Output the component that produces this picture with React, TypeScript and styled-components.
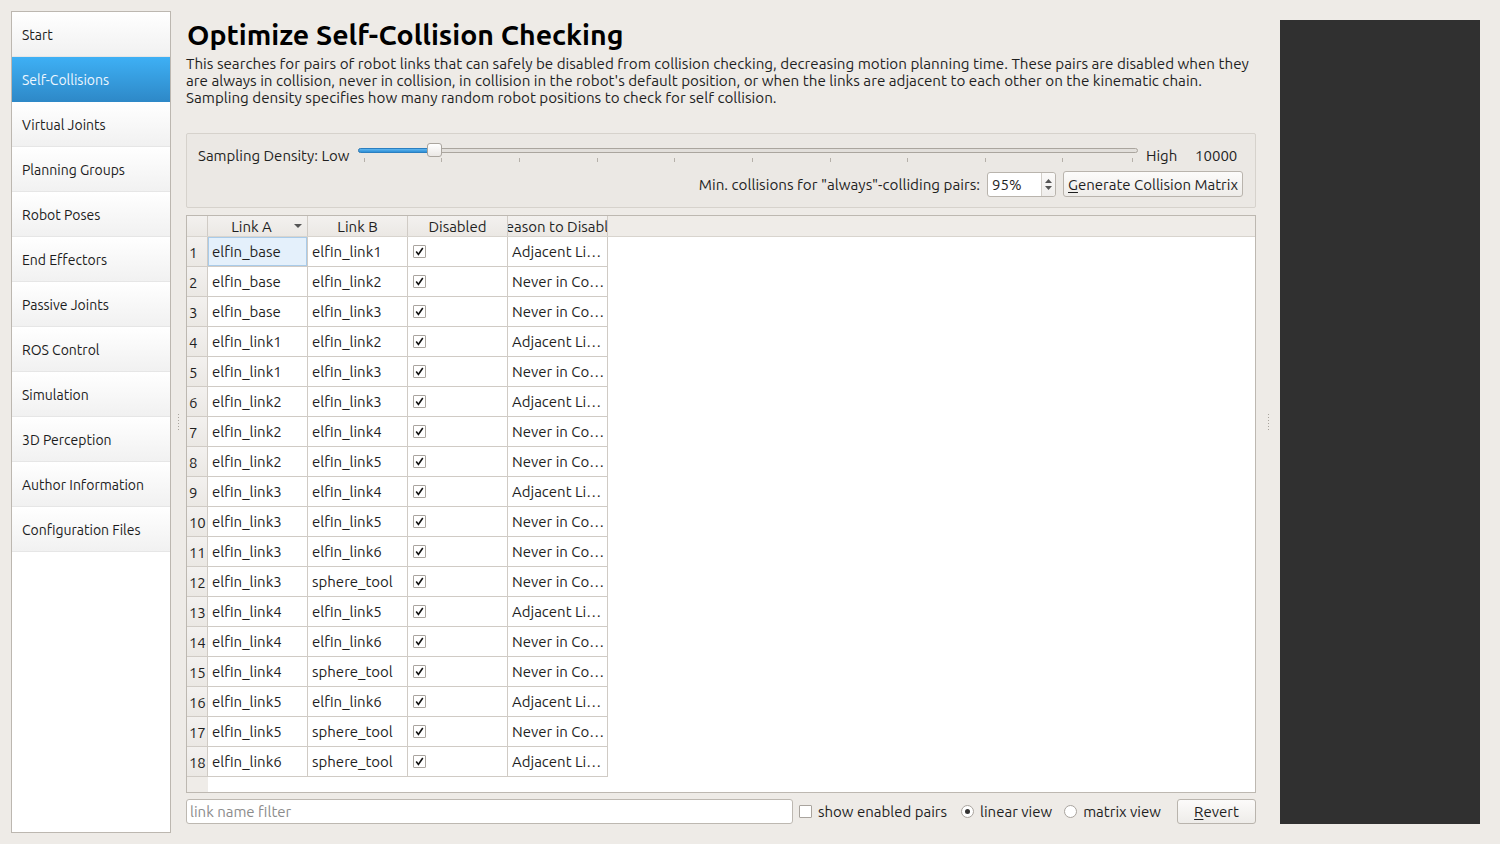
import React from "react";
import styled, { createGlobalStyle } from "styled-components";

const FONT = `"Ubuntu", "Open Sans", "Noto Sans", sans-serif`;

const GlobalStyle = createGlobalStyle`
  html, body { margin: 0; padding: 0; background: #eeebe7; }
  body { font-family: ${FONT}; color: #1f1f1f; }
  * { box-sizing: border-box; }
`;

const Window = styled.div`
  display: flex;
  height: 844px;
  width: 1500px;
  padding: 11px 20px 11px 11px;
`;

const Nav = styled.nav`
  width: 160px;
  flex: none;
  background: #fff;
  border: 1px solid #bcb7b0;
  display: flex;
  flex-direction: column;
`;

const NavItem = styled.div<{ $active?: boolean }>`
  height: 45px;
  display: flex;
  align-items: center;
  padding: 1px 0 0 10px;
  font-size: 14px;
  color: ${(p) => (p.$active ? "#eef7ff" : "#1c1c1c")};
  background: ${(p) =>
    p.$active
      ? "linear-gradient(#3eb0f5, #2e89c8)"
      : "linear-gradient(#ffffff, #f1f1f1)"};
  border-bottom: 1px solid ${(p) => (p.$active ? "#2e89c8" : "#e6e6e6")};
`;

const Splitter = styled.div<{ $w: number }>`
  width: ${(p) => p.$w}px;
  flex: none;
  display: flex;
  align-items: center;
  justify-content: center;
`;

const Dots = styled.div`
  display: flex;
  flex-direction: column;
  gap: 2px;
  & > span {
    width: 1px;
    height: 1px;
    background: #a8a39c;
  }
`;

const Main = styled.main`
  width: 1070px;
  flex: none;
  display: flex;
  flex-direction: column;
  padding-bottom: 9px;
`;

const Title = styled.h1`
  margin: 6px 0 0 1px;
  font-size: 28.5px;
  font-weight: 700;
  line-height: 34px;
  color: #000;
`;

const Desc = styled.p`
  margin: 4px 0 0 0;
  font-size: 15.2px;
  line-height: 17px;
  color: #1f1f1f;
  white-space: nowrap;
`;

const SamplingPanel = styled.section`
  margin-top: 27px;
  height: 75px;
  border: 1px solid #d6d2cc;
  border-radius: 2px;
  background: #ebe8e4;
  padding: 10px 12px 0 11px;
  display: flex;
  flex-direction: column;
  gap: 5px;
`;

const SliderRow = styled.div`
  display: flex;
  align-items: center;
  height: 22px;
  font-size: 15px;
`;

const SliderLabel = styled.span`
  width: 160px;
  flex: none;
`;

const SliderTrack = styled.div`
  position: relative;
  width: 780px;
  height: 22px;
  flex: none;
  margin-top: 2px;
`;

const Groove = styled.div`
  position: absolute;
  left: 0;
  right: 0;
  top: 3px;
  height: 5px;
  border: 1px solid #aaa59e;
  border-radius: 3px;
  background: #e2dfdb;
`;

const Fill = styled.div`
  position: absolute;
  left: 0;
  top: 3px;
  height: 5px;
  border-radius: 3px 0 0 3px;
  background: linear-gradient(#5fb6ef, #2f8fd6);
  border: 1px solid #2b7fc0;
`;

const Handle = styled.div`
  position: absolute;
  top: -2px;
  width: 15px;
  height: 14px;
  border: 1px solid #aaa59e;
  border-radius: 3px;
  background: linear-gradient(#ffffff, #ebe8e5);
`;

const Tick = styled.div`
  position: absolute;
  top: 13px;
  width: 1px;
  height: 4px;
  background: #b5b0a9;
`;

const HighLabel = styled.span`
  margin-left: 8px;
  width: 49px;
  flex: none;
`;

const ControlsRow = styled.div`
  display: flex;
  align-items: center;
  justify-content: flex-end;
  gap: 7px;
  font-size: 15.2px;
  height: 26px;
`;

const SpinBox = styled.div`
  width: 69px;
  height: 25px;
  background: #fff;
  border: 1px solid #b9b4ad;
  border-radius: 3px;
  display: flex;
  align-items: stretch;
`;

const SpinText = styled.span`
  flex: 1;
  display: flex;
  align-items: center;
  padding-left: 4px;
  font-size: 15px;
`;

const SpinArrows = styled.div`
  width: 14px;
  border-left: 1px solid #d2cec8;
  display: flex;
  flex-direction: column;
  align-items: center;
  justify-content: center;
  gap: 3px;
  background: linear-gradient(#fbfaf9, #efedeb);
  border-radius: 0 3px 3px 0;
`;

const Button = styled.button<{ $w: number }>`
  width: ${(p) => p.$w}px;
  height: 26px;
  flex: none;
  border: 1px solid #b9b4ad;
  border-radius: 3px;
  background: linear-gradient(#fcfbfa, #eeece9);
  font-family: ${FONT};
  font-size: 15px;
  color: #1f1f1f;
  padding: 0;
  cursor: default;
  & u { text-decoration-thickness: 1px; text-underline-offset: 2px; }
`;

const Table = styled.div`
  margin-top: 7px;
  flex: 1;
  border: 1px solid #bdb8b1;
  display: flex;
  flex-direction: column;
  background: #fff;
  min-height: 0;
`;

const HeaderRow = styled.div`
  display: flex;
  height: 21px;
  background: #efece8;
  border-bottom: 1px solid #d8d4ce;
  flex: none;
`;

const HeaderCell = styled.div<{ $w: number; $pr?: number }>`
  width: ${(p) => p.$w}px;
  flex: none;
  position: relative;
  display: flex;
  align-items: center;
  justify-content: center;
  border-right: 1px solid #d0cbc5;
  font-size: 15px;
  overflow: hidden;
  white-space: nowrap;
  padding-right: ${(p) => p.$pr ?? 0}px;
  background: linear-gradient(#f3f1ef, #ebe8e4);
`;

const SortArrow = styled.span`
  position: absolute;
  right: 5px;
  top: 8px;
  width: 0;
  height: 0;
  border-left: 4px solid transparent;
  border-right: 4px solid transparent;
  border-top: 4px solid #555;
`;

const Body = styled.div`
  flex: 1;
  display: flex;
  min-height: 0;
`;

const RowHeaders = styled.div`
  width: 21px;
  flex: none;
  background: #efece8;
  display: flex;
  flex-direction: column;
`;

const RowNum = styled.div`
  height: 30px;
  flex: none;
  display: flex;
  align-items: center;
  padding: 1px 0 0 2px;
  font-size: 15px;
  letter-spacing: -0.3px;
  border-right: 1px solid #d0cbc5;
  border-bottom: 1px solid #d0cbc5;
  background: linear-gradient(#f3f1ef, #ebe8e4);
`;

const Rows = styled.div`
  flex: 1;
  display: flex;
  flex-direction: column;
`;

const DataRow = styled.div`
  display: flex;
  height: 30px;
  flex: none;
`;

const Cell = styled.div<{ $selected?: boolean }>`
  width: 100px;
  flex: none;
  display: flex;
  align-items: center;
  padding: 0 0 0 4px;
  font-size: 15px;
  border-right: 1px solid #d0cbc5;
  border-bottom: 1px solid #d0cbc5;
  white-space: nowrap;
  overflow: hidden;
  background: ${(p) => (p.$selected ? "#e4f0fb" : "#fff")};
  box-shadow: ${(p) => (p.$selected ? "inset 0 0 0 1px #a9cbe9" : "none")};
`;

const CheckBox = styled.span`
  width: 13px;
  height: 13px;
  flex: none;
  border: 1px solid #a9a49e;
  border-radius: 1px;
  background: #fff;
  display: inline-flex;
  align-items: center;
  justify-content: center;
`;

const BottomBar = styled.div`
  margin-top: 6px;
  height: 25px;
  display: flex;
  align-items: center;
  font-size: 15px;
  flex: none;
`;

const FilterInput = styled.input`
  width: 607px;
  height: 25px;
  flex: none;
  border: 1px solid #bdb8b1;
  border-radius: 3px;
  background: #fff;
  font-family: ${FONT};
  font-size: 15px;
  padding: 0 3px;
  outline: none;
  &::placeholder { color: #8c8c8c; }
`;

const Option = styled.label<{ $ml: number }>`
  display: flex;
  align-items: center;
  gap: 6px;
  margin-left: ${(p) => p.$ml}px;
  white-space: nowrap;
`;

const Radio = styled.span<{ $on?: boolean }>`
  width: 13px;
  height: 13px;
  border-radius: 50%;
  border: 1px solid #a9a49e;
  background: #fff;
  display: inline-flex;
  align-items: center;
  justify-content: center;
  &::after {
    content: "";
    width: 5px;
    height: 5px;
    border-radius: 50%;
    background: ${(p) => (p.$on ? "#333" : "transparent")};
  }
`;

const RevertButton = styled(Button)`
  margin-left: auto;
  height: 25px;
`;

const Viewer = styled.div`
  width: 200px;
  flex: none;
  margin: 9px 0 9px 0;
  background: #303030;
`;

const Check = () => (
  <svg width="9" height="9" viewBox="0 0 9 9">
    <path d="M1.2 4.6 L3.4 7.4 L7.8 1" fill="none" stroke="#111" strokeWidth="1.6" />
  </svg>
);

const navItems = [
  "Start",
  "Self-Collisions",
  "Virtual Joints",
  "Planning Groups",
  "Robot Poses",
  "End Effectors",
  "Passive Joints",
  "ROS Control",
  "Simulation",
  "3D Perception",
  "Author Information",
  "Configuration Files",
];

const A = "Adjacent Li…";
const N = "Never in Co…";
const rows: [string, string, string][] = [
  ["elfin_base", "elfin_link1", A],
  ["elfin_base", "elfin_link2", N],
  ["elfin_base", "elfin_link3", N],
  ["elfin_link1", "elfin_link2", A],
  ["elfin_link1", "elfin_link3", N],
  ["elfin_link2", "elfin_link3", A],
  ["elfin_link2", "elfin_link4", N],
  ["elfin_link2", "elfin_link5", N],
  ["elfin_link3", "elfin_link4", A],
  ["elfin_link3", "elfin_link5", N],
  ["elfin_link3", "elfin_link6", N],
  ["elfin_link3", "sphere_tool", N],
  ["elfin_link4", "elfin_link5", A],
  ["elfin_link4", "elfin_link6", N],
  ["elfin_link4", "sphere_tool", N],
  ["elfin_link5", "elfin_link6", A],
  ["elfin_link5", "sphere_tool", N],
  ["elfin_link6", "sphere_tool", A],
];

const ticks = [6, 83, 161, 239, 316, 394, 472, 549, 627, 704, 774];

const SplitDots = () => (
  <Dots>
    {[0, 1, 2, 3, 4, 5].map((i) => (
      <span key={i} />
    ))}
  </Dots>
);

export default function App() {
  return (
    <>
      <GlobalStyle />
      <Window>
        <Nav>
          {navItems.map((n) => (
            <NavItem key={n} $active={n === "Self-Collisions"}>
              {n}
            </NavItem>
          ))}
        </Nav>
        <Splitter $w={15}>
          <SplitDots />
        </Splitter>
        <Main>
          <Title>Optimize Self-Collision Checking</Title>
          <Desc>
            This searches for pairs of robot links that can safely be disabled from collision checking, decreasing motion planning time. These pairs are disabled when they
            <br />
            are always in collision, never in collision, in collision in the robot's default position, or when the links are adjacent to each other on the kinematic chain.
            <br />
            Sampling density specifies how many random robot positions to check for self collision.
          </Desc>
          <SamplingPanel>
            <SliderRow>
              <SliderLabel>Sampling Density: Low</SliderLabel>
              <SliderTrack>
                <Groove />
                <Fill style={{ width: 78 }} />
                <Handle style={{ left: 69 }} />
                {ticks.map((t) => (
                  <Tick key={t} style={{ left: t }} />
                ))}
              </SliderTrack>
              <HighLabel>High</HighLabel>
              <span>10000</span>
            </SliderRow>
            <ControlsRow>
              <span>Min. collisions for "always"-colliding pairs:</span>
              <SpinBox>
                <SpinText>95%</SpinText>
                <SpinArrows>
                  <svg width="7" height="4" viewBox="0 0 7 4">
                    <path d="M0 4 L3.5 0 L7 4 Z" fill="#555" />
                  </svg>
                  <svg width="7" height="4" viewBox="0 0 7 4">
                    <path d="M0 0 L3.5 4 L7 0 Z" fill="#555" />
                  </svg>
                </SpinArrows>
              </SpinBox>
              <Button $w={180}>
                <u>G</u>enerate Collision Matrix
              </Button>
            </ControlsRow>
          </SamplingPanel>
          <Table>
            <HeaderRow>
              <HeaderCell $w={21} />
              <HeaderCell $w={100} $pr={12}>
                Link A
                <SortArrow />
              </HeaderCell>
              <HeaderCell $w={100}>Link B</HeaderCell>
              <HeaderCell $w={100}>Disabled</HeaderCell>
              <HeaderCell $w={100} $pr={2}>Reason to Disable</HeaderCell>
            </HeaderRow>
            <Body>
              <RowHeaders>
                {rows.map((_, i) => (
                  <RowNum key={i}>{i + 1}</RowNum>
                ))}
              </RowHeaders>
              <Rows>
                {rows.map(([a, b, r], i) => (
                  <DataRow key={i}>
                    <Cell $selected={i === 0}>{a}</Cell>
                    <Cell>{b}</Cell>
                    <Cell style={{ paddingLeft: 5 }}>
                      <CheckBox>
                        <Check />
                      </CheckBox>
                    </Cell>
                    <Cell>{r}</Cell>
                  </DataRow>
                ))}
              </Rows>
            </Body>
          </Table>
          <BottomBar>
            <FilterInput placeholder="link name filter" />
            <Option $ml={6}>
              <CheckBox />
              show enabled pairs
            </Option>
            <Option $ml={14}>
              <Radio $on />
              linear view
            </Option>
            <Option $ml={12}>
              <Radio />
              matrix view
            </Option>
            <RevertButton $w={79}>
              <u>R</u>evert
            </RevertButton>
          </BottomBar>
        </Main>
        <Splitter $w={24}>
          <SplitDots />
        </Splitter>
        <Viewer />
      </Window>
    </>
  );
}
